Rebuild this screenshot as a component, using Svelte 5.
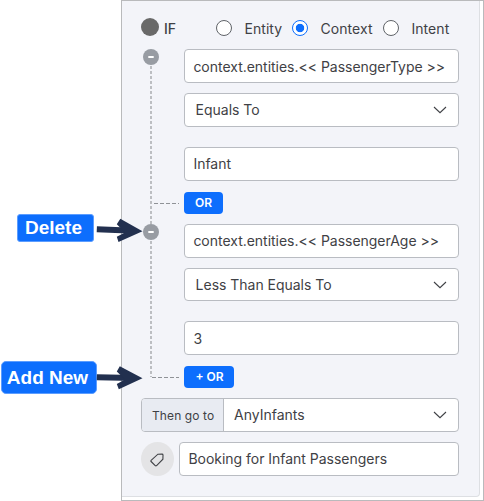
<script>
  let scope = $state('Context');
  const scopes = [
    { name: 'Entity', width: 76 },
    { name: 'Context', width: 91 },
    { name: 'Intent', width: 70 }
  ];
</script>

{#snippet chevron()}
  <svg class="chevron" width="14" height="8" viewBox="0 0 14 8"><path d="M1 1 L7 6.7 L13 1" /></svg>
{/snippet}

<div class="page">
  <div class="frame">
    <div class="panel">
      <div class="head">
        <span class="step"></span>
        <span class="if">IF</span>
        {#each scopes as s}
          <label class="option" style:width="{s.width}px">
            <input type="radio" name="scope" value={s.name} bind:group={scope} />
            <span>{s.name}</span>
          </label>
        {/each}
      </div>

      <div class="conditions">
        <svg class="rail" width="43" height="339" viewBox="0 0 43 339">
          <path class="trunk" d="M10 17 V328" />
          <path class="branch" d="M13 154.5 H38 M11 328.5 H38" />
          <circle cx="10" cy="8" r="8" />
          <circle cx="10" cy="183" r="8" />
          <path class="minus" d="M7.3 8 H12.7 M7.3 183 H12.7" />
        </svg>
        <div class="fields">
          <div class="field low"><span>context.entities.&lt;&lt; PassengerType &gt;&gt;</span></div>
          <div class="field select gap10"><span>Equals To</span>{@render chevron()}</div>
          <div class="field gap20"><span>Infant</span></div>
          <button class="or">OR</button>
          <div class="field gap10"><span>context.entities.&lt;&lt; PassengerAge &gt;&gt;</span></div>
          <div class="field select gap10 short"><span>Less Than Equals To</span>{@render chevron()}</div>
          <div class="field gap20 low"><span>3</span></div>
          <button class="or add">+ OR</button>
        </div>
      </div>

      <div class="goto">
        <span class="prefix">Then go to</span>
        <span class="target">AnyInfants</span>
        {@render chevron()}
      </div>

      <div class="tagrow">
        <span class="tag">
          <svg width="14" height="14" viewBox="0 0 14 14"><path d="M7.9 1.2 L12 1.1 Q13 1.1 13 2 L12.9 6.2 L6.6 12.6 Q5.9 13.2 5.2 12.6 L1.1 8.5 Q.5 7.9 1.1 7.4 Z" /></svg>
        </span>
        <div class="field"><span>Booking for Infant Passengers</span></div>
      </div>
    </div>
  </div>

  <div class="note delete">Delete</div>
  <svg class="arrow first" width="48" height="26" viewBox="0 0 48 26">
    <path class="shaft" d="M.8 12.3 L38 13.8" /><path class="tip" d="M24.3 1.8 L46.5 14.3 L22.5 25 L20.8 19.8 L29 15.5 L20.8 7.2 Z" />
  </svg>
  <div class="note addnew">Add New</div>
  <svg class="arrow second" width="48" height="26" viewBox="0 0 48 26">
    <path class="shaft" d="M.8 13.2 L38 14" /><path class="tip" d="M23.8 2.2 L46.5 14.2 L22.8 25.2 L20.8 20 L29 15.5 L20.8 7.4 Z" />
  </svg>
</div>

<style>
  :global(body) { background: #fff; }
  .page {
    position: relative;
    box-sizing: border-box;
    width: 484px;
    height: 501px;
    padding-left: 121px;
    overflow: hidden;
    font: 14px/20px Inter, sans-serif;
    color: #3f4145;
  }
  .page * { box-sizing: border-box; }
  .frame {
    height: 501px;
    border: 1px solid #b9babc;
    padding: 0 3px 3px 0;
  }
  .panel {
    height: 496px;
    padding: 17px 0 0 19px;
    background: #f3f4f9;
    border: solid #dddfe3;
    border-width: 0 1px 1px 0;
    border-radius: 0 0 4px 0;
  }
  .head { display: flex; height: 20px; align-items: center; }
  .step { width: 18px; height: 18px; margin-top: -2px; border-radius: 50%; background: #696969; }
  .if { width: 52px; margin-left: 5px; padding-top: 2px; font-weight: 500; }
  .option { display: flex; align-items: center; gap: 12.4px; white-space: nowrap; }
  .option span { padding-top: 2px; letter-spacing: .08px; }
  input {
    appearance: none;
    flex: none;
    width: 16px;
    height: 16px;
    margin: 0;
    border: 1px solid #5f6368;
    border-radius: 50%;
    background: #fff;
  }
  input:checked {
    border-color: #0d6efd;
    background: radial-gradient(circle, #0d6efd 3.8px, #fff 4.6px);
  }
  .conditions { display: flex; margin-top: 11px; }
  .rail { display: block; flex: none; fill: none; }
  .trunk { stroke: #bcbec2; stroke-width: 2; stroke-dasharray: 3 2; }
  .branch { stroke: #8f9297; stroke-dasharray: 4 2; }
  .rail circle { fill: #989ca3; }
  .minus { stroke: #fff; stroke-width: 2; }
  .fields { width: 275px; }
  .field {
    display: flex;
    align-items: center;
    height: 34px;
    padding: 0 8.4px;
    border: 1px solid #b9bcc2;
    border-radius: 4px;
    background: #fff;
    letter-spacing: -.02px;
    white-space: nowrap;
  }
  .low { padding-top: 2px; }
  .select { padding-left: 10.6px; justify-content: space-between; padding-right: 11px; }
  .short { height: 33px; }
  .gap10 { margin-top: 10px; }
  .gap20 { margin-top: 20px; }
  .chevron { fill: none; stroke: #3f4145; stroke-width: 1.1; }
  .or {
    display: block;
    width: 39px;
    height: 22px;
    margin-top: 11px;
    padding: 0;
    border: 0;
    border-radius: 4px;
    background: #0d6efd;
    color: #fff;
    font: 600 12px/22px Inter, sans-serif;
  }
  .add { width: 50px; padding-left: 1px; }
  .goto {
    display: flex;
    align-items: center;
    width: 318px;
    height: 34px;
    margin-top: 10px;
    padding-right: 11px;
    border: 1px solid #b9bcc2;
    border-radius: 4px;
    background: #fff;
  }
  .prefix {
    width: 82px;
    height: 32px;
    padding: 1px 0 0 10px;
    border-right: 1px solid #b9bcc2;
    border-radius: 3px 0 0 3px;
    background: #e8ebf2;
    font-size: 12px;
    line-height: 32px;
    letter-spacing: .1px;
  }
  .target { flex: 1; padding-left: 10px; }
  .tagrow { display: flex; gap: 5px; margin-top: 10px; }
  .tag { display: grid; place-items: center; width: 33px; height: 34px; border-radius: 50%; background: #e4e4e6; }
  .tag svg { fill: none; stroke: #3f4145; stroke-width: 1.1; margin: 1px 0 0 -2px; }
  .tagrow .field { width: 280px; }
  .note {
    position: absolute;
    border: 1px solid #5c9dff;
    background: #0d6efd;
    color: #fff;
    font: bold 19px/25px "Liberation Sans", Arial, sans-serif;
    text-align: center;
    white-space: nowrap;
  }
  .delete { left: 17px; top: 214px; width: 77px; height: 28px; border-radius: 3px; padding-right: 4px; }
  .addnew { left: 1px; top: 361px; width: 96px; height: 33px; padding-right: 3px; border-radius: 5px; line-height: 31px; }
  .arrow { position: absolute; left: 96px; }
  .first { top: 217px; }
  .second { top: 364px; }
  .shaft { fill: none; stroke: #22304f; stroke-width: 6; }
  .tip { fill: #22304f; }
</style>
